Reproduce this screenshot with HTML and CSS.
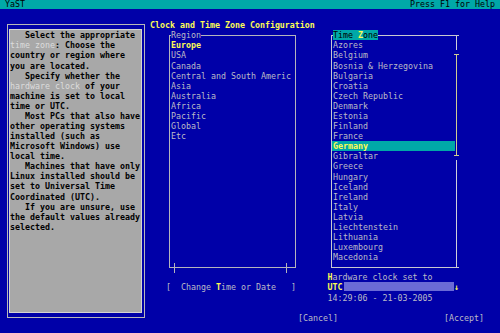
FILE: index.html
```html
<!DOCTYPE html>
<html lang="en">
<head>
<meta charset="utf-8">
<title>YaST - Clock and Time Zone Configuration</title>
<link rel="stylesheet" href="styles.css">
</head>
<body>
<div class="screen">
  <header class="topbar"><span>YaST</span><span>Press F1 for Help</span></header>
  <main class="main">
    <aside class="help-frame">
      <div class="help"><p>   Select the appropriate</p><p><span class="link">time zone</span>: Choose the</p><p>country or region where</p><p>you are located.</p><p>   Specify whether the</p><p><span class="link">hardware clock</span> of your</p><p>machine is set to local</p><p>time or UTC.</p><p>   Most PCs that also have</p><p>other operating systems</p><p>installed (such as</p><p>Microsoft Windows) use</p><p>local time.</p><p>   Machines that have only</p><p>Linux installed should be</p><p>set to Universal Time</p><p>Coordinated (UTC).</p><p>   If you are unsure, use</p><p>the default values already</p><p>selected.</p></div>
    </aside>
    <section class="config">
      <h1 class="title">Clock and Time Zone Configuration</h1>
      <div class="panels">
        <div class="left-col">
          <div class="frame region">
            <div class="frame-head"><span class="frame-label">Region</span></div>
            <ul class="items">
              <li class="current">Europe</li>
              <li>USA</li>
              <li>Canada</li>
              <li>Central and South Americ</li>
              <li>Asia</li>
              <li>Australia</li>
              <li>Africa</li>
              <li>Pacific</li>
              <li>Global</li>
              <li>Etc</li>
            </ul>
          </div>
          <div class="change">[  Change <span class="hot">T</span>ime or Date   ]</div>
        </div>
        <div class="right-col">
          <div class="frame tz">
            <div class="tz-body">
              <div class="frame-head"><span class="frame-label active">Time <span class="hot">Z</span>one</span></div>
              <ul class="items">
                <li>Azores</li>
                <li>Belgium</li>
                <li>Bosnia &amp; Herzegovina</li>
                <li>Bulgaria</li>
                <li>Croatia</li>
                <li>Czech Republic</li>
                <li>Denmark</li>
                <li>Estonia</li>
                <li>Finland</li>
                <li>France</li>
                <li class="selected">Germany</li>
                <li>Gibraltar</li>
                <li>Greece</li>
                <li>Hungary</li>
                <li>Iceland</li>
                <li>Ireland</li>
                <li>Italy</li>
                <li>Latvia</li>
                <li>Liechtenstein</li>
                <li>Lithuania</li>
                <li>Luxembourg</li>
                <li>Macedonia</li>
              </ul>
            </div>
            <div class="vscroll">
              <div class="track top"></div>
              <div class="cap"></div>
              <div class="thumb"></div>
              <div class="cap"></div>
              <div class="track bottom"></div>
            </div>
          </div>
          <div class="hw-label"><span class="hot">H</span>ardware clock set to</div>
          <div class="hw-row"><span class="utc">UTC</span><span class="field"></span><span class="arrow">↓</span></div>
          <div class="hw-date">14:29:06 - 21-03-2005</div>
        </div>
      </div>
      <div class="buttons"><span>[Cancel]</span><span>[Accept]</span></div>
    </section>
  </main>
</div>
</body>
</html>
```

FILE: styles.css
```css
* { box-sizing: border-box; margin: 0; padding: 0; }
html, body { width: 500px; height: 333px; overflow: hidden; }
body {
  background: #0000a8;
  font-family: "DejaVu Sans Mono", "Liberation Mono", monospace;
  font-size: 8.3px;
  line-height: 10.09px;
  color: #bcbcc6;
}
.screen { width: 500px; height: 333px; }

.topbar {
  height: 9px;
  line-height: 9px;
  background: #00a8a8;
  color: #000;
  display: flex;
  justify-content: space-between;
  padding: 0 5px;
}

.main { display: flex; }

.help-frame {
  margin: 15px 0 0 7px;
  width: 138px;
  height: 294px;
  border: 1px solid #b8b8b8;
  padding: 4px 2px 4px 1px;
}
.help {
  height: 100%;
  background: #a8a8a8;
  border: 1px solid #d4d4d4;
  color: #000;
  padding-top: 0.27px;
  font-weight: bold;
}
.help p { white-space: pre; height: 10.09px; }
.help .link { color: #dcdcdc; font-weight: normal; }

.config { margin-left: 5px; width: 350px; padding-top: 11.18px; }
.title { font-size: inherit; font-weight: bold; color: #fcfc54; }

.panels { display: flex; margin-top: 4.73px; padding-left: 16px; }
.left-col { width: 130px; }
.right-col { width: 132px; margin-left: 31.5px; }

.frame { border: 1px solid #b4b4bc; height: 233px; }
.frame-head { margin-top: -5.73px; height: 10.09px; }
.frame-label { background: #0000a8; margin-left: 1px; display: inline-block; }
.frame-label.active { background: #00a8a8; color: #000; }
.hot { color: #fcfc54; font-weight: bold; }

.items { list-style: none; }
.items li { padding-left: 1px; white-space: pre; }
.items .current { color: #fcfc54; font-weight: bold; }
.items .selected { background: #00a8a8; color: #fcfc54; font-weight: bold; }

.region { margin-left: 3px; width: 127px; position: relative; }
.region::before, .region::after {
  content: "";
  position: absolute;
  bottom: -6px;
  width: 1px;
  height: 10px;
  background: #b4b4bc;
}
.region::before { left: 4px; }
.region::after { left: 116px; }

.change { margin-top: 14.5px; white-space: pre; }

.tz {
  margin-left: 3.5px;
  width: 128px;
  border-right: none;
  border-color: #c8c8d0;
  display: flex;
}
.tz-body { width: 123px; }
.vscroll { width: 4px; display: flex; flex-direction: column; }
.track { width: 1px; margin-left: 1px; background: #d0d0d8; }
.track.top { height: 14px; margin-bottom: 4px; }
.track.bottom { flex: 1; margin-top: 4px; }
.cap { width: 5px; height: 1px; margin-left: -1px; background: #d0cc90; }
.thumb { width: 1px; height: 100px; margin-left: 1px; background: #d0cc90; }

.hw-label { margin-top: 4.4px; }
.hw-row { display: flex; height: 10.09px; }
.utc { color: #fcfc54; font-weight: bold; }
.field { width: 110px; height: 8.5px; margin-left: 1.5px; background: #6a6ad6; }
.arrow { color: #fcfc54; font-weight: bold; }

.buttons { display: flex; gap: 106px; margin-top: 10.1px; padding-left: 148px; }
```
